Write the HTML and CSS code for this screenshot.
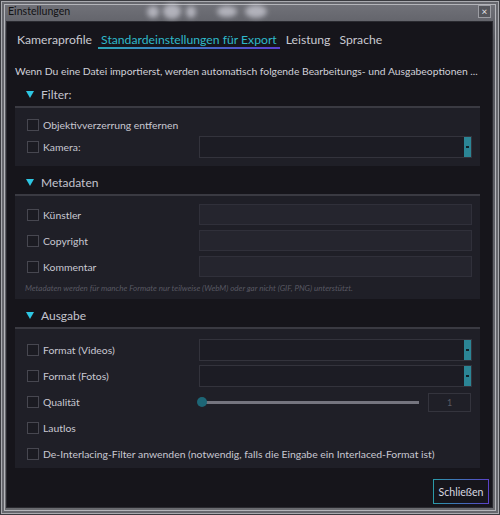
FILE: index.html
```html
<!DOCTYPE html>
<html lang="de">
<head>
<meta charset="utf-8">
<title>Einstellungen</title>
<link rel="stylesheet" href="styles.css">
</head>
<body>
<div class="window">
  <div class="titlebar">
    <span class="title">Einstellungen</span>
    <span class="glass g1"></span><span class="glass g2"></span><span class="glass g3"></span><span class="glass g4"></span><span class="glass g5"></span>
    <span class="close">×</span>
  </div>
  <div class="client">
    <nav class="tabs">
      <span class="tab">Kameraprofile</span>
      <span class="tab active">Standardeinstellungen für Export</span>
      <span class="tab">Leistung</span>
      <span class="tab">Sprache</span>
    </nav>
    <p class="intro">Wenn Du eine Datei importierst, werden automatisch folgende Bearbeitungs- und Ausgabeoptionen ...</p>

    <section class="section s-filter">
      <div class="head"><span class="tri"></span>Filter:</div>
      <div class="panel">
        <div class="row"><span class="cb"></span><span class="lbl">Objektivverzerrung entfernen</span></div>
        <div class="row"><span class="cb"></span><span class="lbl">Kamera:</span><span class="select"><span class="arrow"></span></span></div>
      </div>
    </section>

    <section class="section s-meta">
      <div class="head"><span class="tri"></span>Metadaten</div>
      <div class="panel">
        <div class="row"><span class="cb"></span><span class="lbl">Künstler</span><span class="input"></span></div>
        <div class="row"><span class="cb"></span><span class="lbl">Copyright</span><span class="input"></span></div>
        <div class="row"><span class="cb"></span><span class="lbl">Kommentar</span><span class="input"></span></div>
        <p class="note">Metadaten werden für manche Formate nur teilweise (WebM) oder gar nicht (GIF, PNG) unterstützt.</p>
      </div>
    </section>

    <section class="section s-out">
      <div class="head"><span class="tri"></span>Ausgabe</div>
      <div class="panel">
        <div class="row"><span class="cb"></span><span class="lbl">Format (Videos)</span><span class="select"><span class="arrow"></span></span></div>
        <div class="row"><span class="cb"></span><span class="lbl">Format (Fotos)</span><span class="select"><span class="arrow"></span></span></div>
        <div class="row"><span class="cb"></span><span class="lbl">Qualität</span><span class="slider"><span class="thumb"></span><span class="track"></span></span><span class="num">1</span></div>
        <div class="row"><span class="cb"></span><span class="lbl">Lautlos</span></div>
        <div class="row"><span class="cb"></span><span class="lbl wide">De-Interlacing-Filter anwenden (notwendig, falls die Eingabe ein Interlaced-Format ist)</span></div>
      </div>
    </section>

    <div class="footer"><button class="btn">Schließen</button></div>
  </div>
</div>
</body>
</html>
```
FILE: styles.css
```css
* { box-sizing: border-box; }
html, body { margin: 0; padding: 0; }
body {
  width: 500px; height: 515px; overflow: hidden;
  background: #6c6d73;
  font-family: Lato, "Noto Sans", sans-serif;
}
.window {
  width: 500px; height: 515px;
  display: flex; flex-direction: column;
  background: linear-gradient(#74757c, #55565d 8%, #62636a 60%, #6a6b70);
  padding: 0 8px 8px 7px;
  box-shadow: inset 0 0 0 1px #3a3b40, inset 0 0 0 2px #a9aaaf, inset 0 0 0 4px #66676d, inset 0 0 0 5px #b4b5ba;
}
.titlebar {
  height: 22px; flex: none; position: relative;
  display: flex; align-items: center;
  overflow: hidden;
}
.title { font-size: 10.6px; color: #121214; padding-left: 1px; position: relative; z-index: 1; }
.glass { position: absolute; background: rgba(225,225,235,0.6); filter: blur(2.5px); border-radius: 50%; }
.g1 { left: 140px; top: 6px; width: 12px; height: 12px; }
.g2 { left: 156px; top: 4px; width: 18px; height: 15px; }
.g3 { left: 179px; top: 6px; width: 10px; height: 12px; }
.g4 { left: 210px; top: 6px; width: 20px; height: 11px; }
.g5 { left: 238px; top: 5px; width: 22px; height: 13px; }
.close {
  position: absolute; right: 1px; top: 5px;
  width: 13px; height: 13px;
  border: 1px solid #9c9da3; background: #55565c;
  color: #e8e8ea; font-size: 10px; line-height: 11px; text-align: center;
}
.client {
  flex: 1; background: #16151b;
  display: flex; flex-direction: column;
  padding: 0 12px 0 8px;
  box-shadow: 0 0 0 1px #2a2a30;
}
.tabs { display: flex; gap: 9px; padding: 9px 0 0 2px; height: 27px; }
.tab { font-size: 12.2px; color: #c9c9d1; line-height: 17px; height: 18px; }
.tab.active { color: #2fb9c9; border-bottom: 2px solid #4a4fc0; border-image: linear-gradient(90deg, #2aa5b5, #5b3fd0) 1; padding: 0 3px; margin: 0 -3px; }
.intro { margin: 14px 0 0 0; font-size: 10.35px; color: #d0d0d8; line-height: 16px; height: 16px; white-space: nowrap; }
.section { margin-top: 5px; }
.s-filter { margin-top: 5px; }
.s-meta { margin-top: 6px; }
.s-out { margin-top: 6px; }
.head {
  height: 24px; display: flex; align-items: center; gap: 7px;
  padding-left: 11px; padding-bottom: 2px;
  font-size: 12px; color: #c4c4ce;
  border-bottom: 2px solid #3a3a42;
}
.tri { width: 0; height: 0; border-left: 4.5px solid transparent; border-right: 4.5px solid transparent; border-top: 7px solid #2ec6e2; margin-top: 1px; }
.panel { background: #1f1f27; padding: 6px 8px 8px 12px; display: flex; flex-direction: column; gap: 0; }
.s-meta .panel { padding-top: 8px; gap: 5px; padding-bottom: 6px; }
.s-out .panel { padding-top: 10px; gap: 4px; padding-bottom: 3px; }
.row { display: flex; align-items: center; height: 22px; }
.s-meta .row { height: 21px; }
.cb { width: 12px; height: 12px; border: 1px solid #474750; background: #1b1b22; flex: none; }
.lbl { font-size: 10.4px; color: #c8c8d2; margin-left: 4px; width: 156px; flex: none; white-space: nowrap; }
.lbl.wide { width: auto; }
.select {
  flex: 1; height: 22px; position: relative;
  background: #1c1c24; border: 1px solid #33333c;
}
.arrow { position: absolute; right: 0; top: 0; bottom: 0; width: 7px; background: #2b8595; }
.arrow::after { content: ""; position: absolute; left: 2px; top: 9px; width: 3px; height: 2px; background: #10222a; }
.input { flex: 1; height: 21px; background: #25252e; border: 1px solid #30303a; }
.note { margin: 1px 0 0 -2px; font-size: 8px; font-style: italic; color: #585862; white-space: nowrap; line-height: 10px; }
.slider { width: 222px; height: 12px; position: relative; display: flex; align-items: center; margin-left: -2px; }
.thumb { width: 10px; height: 10px; border-radius: 50%; background: #1d6676; flex: none; position: relative; z-index: 1; }
.track { flex: 1; height: 3px; background: #75757f; margin-left: -2px; }
.num { margin-left: 9px; width: 43px; height: 19px; flex: none; background: #1f1f27; border: 1px solid #34343d; color: #5a5a64; font-size: 9px; text-align: center; line-height: 17px; }
.footer { flex: 1; display: flex; justify-content: flex-end; align-items: flex-end; padding-bottom: 3px; margin-right: -9px; }
.btn {
  font-family: inherit; font-size: 10.6px; color: #d8d8e0;
  background: #16151b; width: 56px; height: 25px; padding: 0;
  border: 1px solid; border-image: linear-gradient(90deg, #2a9aa8, #5a42c8) 1;
}
```
